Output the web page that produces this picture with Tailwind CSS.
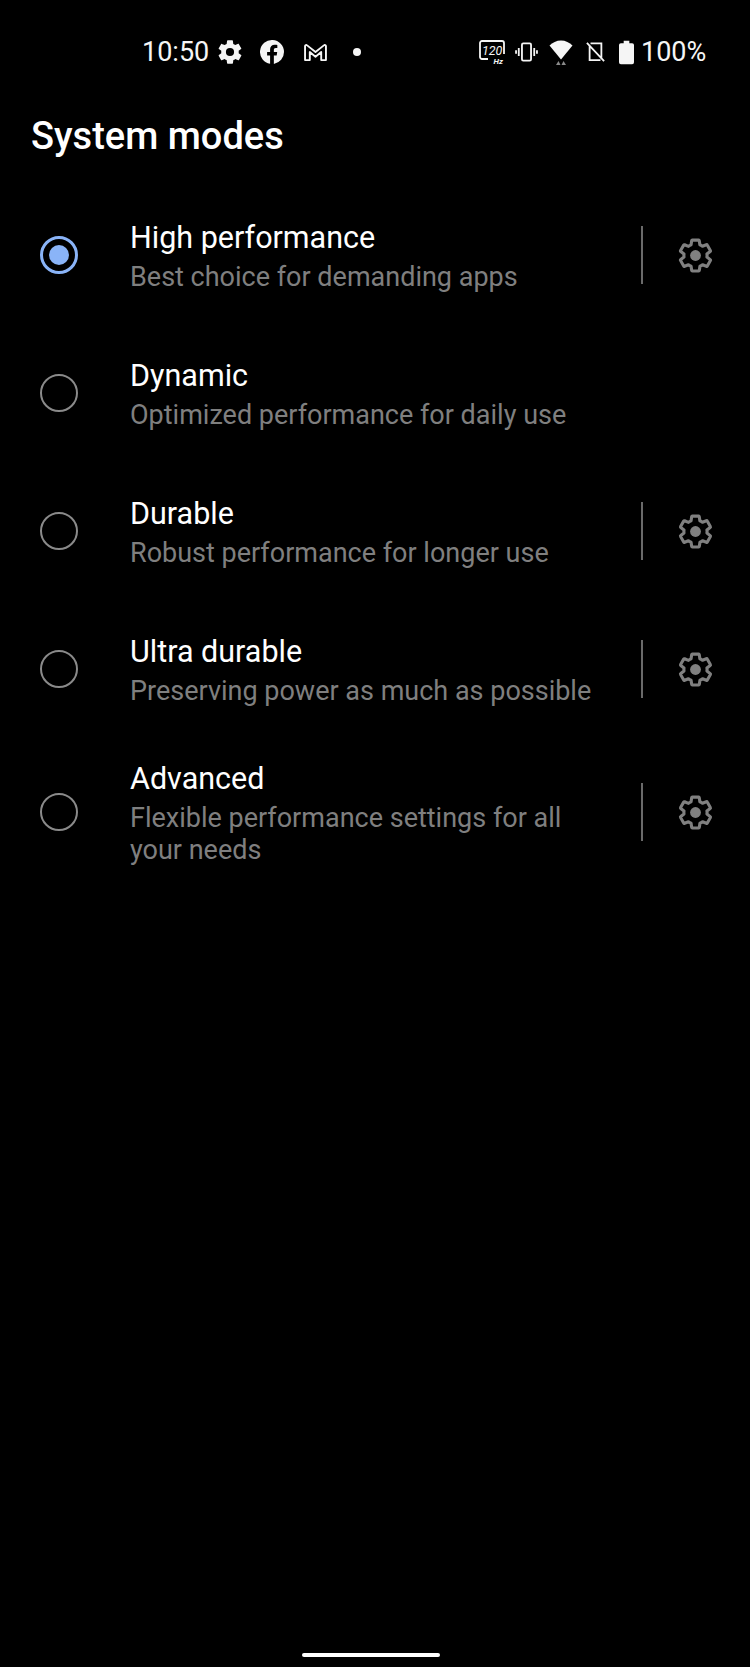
<!DOCTYPE html>
<html lang="en">
<head>
  <meta charset="UTF-8" />
  <meta name="viewport" content="width=device-width, initial-scale=1.0"/>
  <title>System modes</title>
  <script src="https://cdn.jsdelivr.net/npm/@tailwindcss/browser@4"></script>
</head>
<body class="bg-black">
<div class="w-[750px] h-[1667px] bg-black text-white flex flex-col font-['Roboto',sans-serif] overflow-hidden">

  <!-- status bar -->
  <div class="h-[52px] mt-[26px] flex items-center text-[#f5f5f5] shrink-0">
    <span class="ml-[142px] text-[27px] leading-none w-[67px]">10:50</span>
    <svg class="ml-[7px] w-[28px] h-[28px]" viewBox="0 0 24 24" fill="currentColor"><path d="M19.4 13c.04-.32.1-.66.1-1s-.06-.68-.1-1l2.100-1.650c.2-.15.25-.42.12-.64l-2-3.460c-.12-.22-.38-.3-.6-.22l-2.500 1c-.52-.4-1.080-.73-1.700-.98l-.37-2.650A.5.5 0 0 0 14 2h-4a.5.5 0 0 0-.5.42l-.37 2.650c-.62.25-1.180.58-1.700.98l-2.500-1c-.22-.08-.48 0-.6.22l-2 3.460c-.13.22-.07.49.12.64L4.550 11c-.04.32-.07.66-.07 1s.03.68.07 1l-2.100 1.650c-.2.15-.25.42-.12.64l2 3.460c.12.22.38.3.6.22l2.500-1c.52.4 1.080.73 1.700.98l.37 2.650c.04.24.25.42.5.42h4c.25 0 .46-.18.5-.42l.37-2.650c.62-.25 1.180-.58 1.700-.98l2.500 1c.22.08.48 0 .6-.22l2-3.460c.13-.22.07-.49-.12-.64L19.400 13zM12 15.500a3.500 3.500 0 1 1 0-7 3.500 3.500 0 0 1 0 7z"/></svg>
    <svg class="ml-[16px] w-[24px] h-[24px]" viewBox="0 0 24 24" fill="currentColor"><path d="M24 12a12 12 0 1 0-13.900 11.850V15.500H7.100V12h3V9.360c0-3 1.800-4.670 4.540-4.670 1.310 0 2.680.24 2.680.24v2.950h-1.500c-1.500 0-1.960.93-1.960 1.870V12h3.330l-.53 3.500h-2.800v8.380A12 12 0 0 0 24 12z"/></svg>
    <svg class="ml-[19px] w-[25px] h-[19px]" viewBox="0 0 26 20" fill="none" stroke="currentColor" stroke-width="2" stroke-linejoin="round"><path d="M2 18V3.500c0-1.300 1.300-1.800 2.200-1L13 9.500l8.800-7c.9-.8 2.200-.3 2.200 1V18h-5V9.500L13 14.500 7 9.500V18z"/></svg>
    <span class="ml-[25px] w-[8px] h-[8px] rounded-full bg-[#f5f5f5]"></span>

    <svg class="ml-[118px] w-[26px] h-[24px]" viewBox="0 0 26 24" fill="none" stroke="currentColor" stroke-width="1.800"><path d="M9 19H3a2 2 0 0 1-2-2V3a2 2 0 0 1 2-2h20a2 2 0 0 1 2 2v11"/><text x="3" y="14.500" font-family="Roboto" font-size="12.500" font-style="italic" fill="currentColor" stroke="none">120</text><text x="14.500" y="23.500" font-family="Roboto" font-size="8" font-style="italic" font-weight="700" fill="currentColor" stroke="none">Hz</text></svg>
    <svg class="ml-[9px] w-[25px] h-[20px]" viewBox="0 0 25 22" fill="none" stroke="currentColor" stroke-width="2"><rect x="7.500" y="1.500" width="10" height="19" rx="1.500"/><path d="M4 6.500v9M1 9v4M21 6.500v9M24 9v4"/></svg>
    <svg class="ml-[10px] w-[24px] h-[25px]" viewBox="0 0 24 25"><path d="M0.500 5.500C3.500 2.500 7.500 0.500 12 0.500s8.500 2 11.500 5L12 19.500z" fill="currentColor"/><path d="M7 25l2.500-4 2 4zM12.500 25l2-4 2.500 4z" fill="#8a8a8a"/></svg>
    <svg class="ml-[13px] w-[19px] h-[22px]" viewBox="0 0 21 24" fill="none" stroke="currentColor" stroke-width="2"><path d="M5 2.500h12v16M16 21H4V5.500M1 2l19 20"/></svg>
    <svg class="ml-[14px] w-[15px] h-[25px]" viewBox="0 0 16 25" fill="currentColor"><path d="M5 0h6v2.500h3a2 2 0 0 1 2 2V23a2 2 0 0 1-2 2H2a2 2 0 0 1-2-2V4.500a2 2 0 0 1 2-2h3z"/></svg>
    <span class="ml-[7px] text-[27px] leading-none">100%</span>
  </div>

  <h1 class="ml-[31px] mt-[36px] text-[38px] leading-[44px] font-medium shrink-0">System modes</h1>

  <!-- mode list -->
  <div class="mt-[28px] flex flex-col">

    <div class="h-[138px] flex items-center">
      <span class="ml-[40px] w-[38px] h-[38px] rounded-full border-[3px] border-[#8ab4f8] flex items-center justify-center shrink-0"><span class="w-[20px] h-[20px] rounded-full bg-[#8ab4f8]"></span></span>
      <div class="ml-[52px] w-[511px] pt-[3px] shrink-0">
        <p class="text-[30.5px] leading-[38px]">High performance</p>
        <p class="text-[27px] leading-[34px] text-[#7f7f7f] mt-[3px]">Best choice for demanding apps</p>
      </div>
      <span class="w-[2px] h-[58px] bg-[#6a6a6a] shrink-0"></span>
      <svg class="ml-[34px] w-[37px] h-[37px] text-[#808080]" viewBox="0 0 24 24" fill="none" stroke="currentColor" stroke-width="2" stroke-linejoin="round"><path d="M19.400 13c.04-.32.1-.66.1-1s-.06-.68-.1-1l2.100-1.650c.2-.15.25-.42.12-.64l-2-3.460c-.12-.22-.38-.3-.6-.22l-2.500 1c-.52-.4-1.080-.73-1.700-.98l-.37-2.650A.5.5 0 0 0 14 2h-4a.5.5 0 0 0-.5.42l-.37 2.650c-.62.25-1.180.58-1.700.98l-2.500-1c-.22-.08-.48 0-.6.22l-2 3.460c-.13.22-.07.49.12.64L4.550 11c-.04.32-.07.66-.07 1s.03.68.07 1l-2.100 1.650c-.2.15-.25.42-.12.64l2 3.460c.12.22.38.3.6.22l2.500-1c.52.4 1.080.73 1.700.98l.37 2.650c.04.24.25.42.5.42h4c.25 0 .46-.18.5-.42l.37-2.650c.62-.25 1.180-.58 1.700-.98l2.500 1c.22.08.48 0 .6-.22l2-3.460c.13-.22.07-.49-.12-.64L19.400 13z"/><circle cx="12" cy="12" r="3.500" fill="currentColor" stroke="none"/></svg>
    </div>

    <div class="h-[138px] flex items-center">
      <span class="ml-[40px] w-[38px] h-[38px] rounded-full border-2 border-[#8a8a8a] shrink-0"></span>
      <div class="ml-[52px] w-[511px] pt-[3px] shrink-0">
        <p class="text-[30.5px] leading-[38px]">Dynamic</p>
        <p class="text-[27px] leading-[34px] text-[#7f7f7f] mt-[3px]">Optimized performance for daily use</p>
      </div>
    </div>

    <div class="h-[138px] flex items-center">
      <span class="ml-[40px] w-[38px] h-[38px] rounded-full border-2 border-[#8a8a8a] shrink-0"></span>
      <div class="ml-[52px] w-[511px] pt-[3px] shrink-0">
        <p class="text-[30.5px] leading-[38px]">Durable</p>
        <p class="text-[27px] leading-[34px] text-[#7f7f7f] mt-[3px]">Robust performance for longer use</p>
      </div>
      <span class="w-[2px] h-[58px] bg-[#6a6a6a] shrink-0"></span>
      <svg class="ml-[34px] w-[37px] h-[37px] text-[#808080]" viewBox="0 0 24 24" fill="none" stroke="currentColor" stroke-width="2" stroke-linejoin="round"><path d="M19.400 13c.04-.32.1-.66.1-1s-.06-.68-.1-1l2.100-1.650c.2-.15.25-.42.12-.64l-2-3.460c-.12-.22-.38-.3-.6-.22l-2.500 1c-.52-.4-1.080-.73-1.700-.98l-.37-2.650A.5.5 0 0 0 14 2h-4a.5.5 0 0 0-.5.42l-.37 2.650c-.62.25-1.180.58-1.700.98l-2.500-1c-.22-.08-.48 0-.6.22l-2 3.460c-.13.22-.07.49.12.64L4.550 11c-.04.32-.07.66-.07 1s.03.68.07 1l-2.100 1.650c-.2.15-.25.42-.12.64l2 3.460c.12.22.38.3.6.22l2.500-1c.52.4 1.080.73 1.700.98l.37 2.650c.04.24.25.42.5.42h4c.25 0 .46-.18.5-.42l.37-2.650c.62-.25 1.180-.58 1.700-.98l2.500 1c.22.08.48 0 .6-.22l2-3.460c.13-.22.07-.49-.12-.64L19.400 13z"/><circle cx="12" cy="12" r="3.500" fill="currentColor" stroke="none"/></svg>
    </div>

    <div class="h-[138px] flex items-center">
      <span class="ml-[40px] w-[38px] h-[38px] rounded-full border-2 border-[#8a8a8a] shrink-0"></span>
      <div class="ml-[52px] w-[511px] pt-[3px] shrink-0">
        <p class="text-[30.5px] leading-[38px]">Ultra durable</p>
        <p class="text-[27px] leading-[34px] text-[#7f7f7f] mt-[3px]">Preserving power as much as possible</p>
      </div>
      <span class="w-[2px] h-[58px] bg-[#6a6a6a] shrink-0"></span>
      <svg class="ml-[34px] w-[37px] h-[37px] text-[#808080]" viewBox="0 0 24 24" fill="none" stroke="currentColor" stroke-width="2" stroke-linejoin="round"><path d="M19.400 13c.04-.32.1-.66.1-1s-.06-.68-.1-1l2.100-1.650c.2-.15.25-.42.12-.64l-2-3.460c-.12-.22-.38-.3-.6-.22l-2.500 1c-.52-.4-1.080-.73-1.700-.98l-.37-2.650A.5.5 0 0 0 14 2h-4a.5.5 0 0 0-.5.42l-.37 2.650c-.62.25-1.180.58-1.700.98l-2.500-1c-.22-.08-.48 0-.6.22l-2 3.460c-.13.22-.07.49.12.64L4.550 11c-.04.32-.07.66-.07 1s.03.68.07 1l-2.100 1.650c-.2.15-.25.42-.12.64l2 3.460c.12.22.38.3.6.22l2.500-1c.52.4 1.080.73 1.700.98l.37 2.650c.04.24.25.42.5.42h4c.25 0 .46-.18.5-.42l.37-2.650c.62-.25 1.180-.58 1.700-.98l2.500 1c.22.08.48 0 .6-.22l2-3.460c.13-.22.07-.49-.12-.64L19.400 13z"/><circle cx="12" cy="12" r="3.500" fill="currentColor" stroke="none"/></svg>
    </div>

    <div class="h-[148px] flex items-center">
      <span class="ml-[40px] w-[38px] h-[38px] rounded-full border-2 border-[#8a8a8a] shrink-0"></span>
      <div class="ml-[52px] w-[511px] pt-[2px] pr-[40px] shrink-0">
        <p class="text-[30.5px] leading-[38px]">Advanced</p>
        <p class="text-[27px] leading-[32px] text-[#7f7f7f] mt-[4px]">Flexible performance settings for all your needs</p>
      </div>
      <span class="w-[2px] h-[58px] bg-[#6a6a6a] shrink-0"></span>
      <svg class="ml-[34px] w-[37px] h-[37px] text-[#808080]" viewBox="0 0 24 24" fill="none" stroke="currentColor" stroke-width="2" stroke-linejoin="round"><path d="M19.400 13c.04-.32.1-.66.1-1s-.06-.68-.1-1l2.100-1.650c.2-.15.25-.42.12-.64l-2-3.460c-.12-.22-.38-.3-.6-.22l-2.500 1c-.52-.4-1.080-.73-1.700-.98l-.37-2.650A.5.5 0 0 0 14 2h-4a.5.5 0 0 0-.5.42l-.37 2.650c-.62.25-1.180.58-1.700.98l-2.500-1c-.22-.08-.48 0-.6.22l-2 3.460c-.13.22-.07.49.12.64L4.550 11c-.04.32-.07.66-.07 1s.03.68.07 1l-2.100 1.650c-.2.15-.25.42-.12.64l2 3.460c.12.22.38.3.6.22l2.500-1c.52.4 1.080.73 1.700.98l.37 2.650c.04.24.25.42.5.42h4c.25 0 .46-.18.5-.42l.37-2.650c.62-.25 1.180-.58 1.700-.98l2.500 1c.22.08.48 0 .6-.22l2-3.460c.13-.22.07-.49-.12-.64L19.400 13z"/><circle cx="12" cy="12" r="3.500" fill="currentColor" stroke="none"/></svg>
    </div>
  </div>

  <!-- gesture pill -->
  <div class="mt-auto mb-[10px] ml-[302px] w-[138px] h-[4px] rounded-full bg-white shrink-0"></div>
</div>
</body>
</html>
